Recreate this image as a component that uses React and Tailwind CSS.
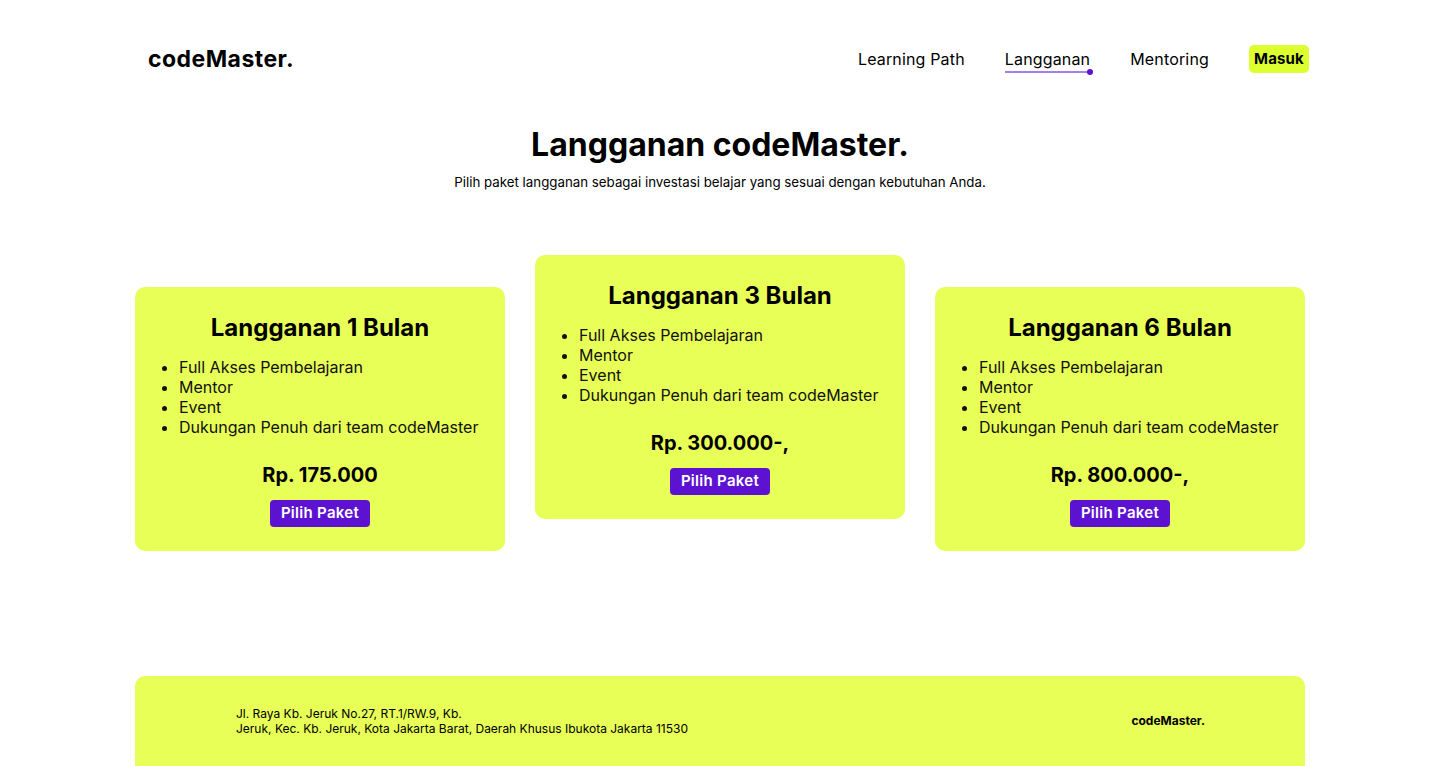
import React from "react";

const plans = [
  { title: "Langganan 1 Bulan", price: "Rp. 175.000", raised: false },
  { title: "Langganan 3 Bulan", price: "Rp. 300.000-,", raised: true },
  { title: "Langganan 6 Bulan", price: "Rp. 800.000-,", raised: false },
];

const features = [
  "Full Akses Pembelajaran",
  "Mentor",
  "Event",
  "Dukungan Penuh dari team codeMaster",
];

const PlanCard = ({ title, price, raised }) => (
  <div
    className={`w-[370px] h-[264px] rounded-[10px] bg-[#e8ff57] px-7 pt-[27px] flex flex-col ${
      raised ? "mt-0" : "mt-[32px]"
    }`}
  >
    <h3 className="text-center text-[24px] leading-[28px] font-bold text-black">{title}</h3>
    <ul className="mt-[15px] list-disc pl-4 text-[16px] leading-[20px] text-[#111] whitespace-nowrap">
      {features.map((f) => (
        <li key={f}>{f}</li>
      ))}
    </ul>
    <p className="mt-[24px] text-center text-[20px] leading-[28px] font-bold text-black">{price}</p>
    <div className="mt-[11px] flex justify-center">
      <button className="h-[27px] w-[100px] rounded-[4px] bg-[#5d12d2] text-white text-[15px] tracking-[0.02em] font-semibold">
        Pilih Paket
      </button>
    </div>
  </div>
);

export default function App() {
  return (
    <div
      className="min-h-screen bg-white text-black"
      style={{ fontFamily: "Inter, 'Noto Sans', sans-serif" }}
    >
      {/* HEADER */}
      <header className="mx-auto w-[1170px] pt-[45px] flex items-center justify-between">
        <div className="pl-[13px] text-[23px] font-bold tracking-[0.02em] leading-[28px]">codeMaster.</div>
        <nav className="flex items-center text-[16px] tracking-[0.01em] -mr-[4px]">
          <a className="mr-[40px]">Learning Path</a>
          <a className="relative mr-[40px]">
            Langganan
            <span className="absolute left-0 right-0 -bottom-[2px] h-[2px] bg-[#a77fe8]" />
            <span className="absolute -right-[3px] -bottom-[4px] h-[6px] w-[6px] rounded-full bg-[#5d12d2]" />
          </a>
          <a className="mr-[40px]">Mentoring</a>
          <button className="h-[28px] w-[60px] rounded-[5px] bg-[#deff2f] text-[15px] font-bold">
            Masuk
          </button>
        </nav>
      </header>

      {/* HERO */}
      <section className="mt-[52px] text-center">
        <h1 className="text-[32px] leading-[40px] font-bold">Langganan codeMaster.</h1>
        <p className="mt-[9px] text-[13.3px] leading-[16px]">
          Pilih paket langganan sebagai investasi belajar yang sesuai dengan kebutuhan Anda.
        </p>
      </section>

      {/* PLANS */}
      <section className="mx-auto mt-[65px] w-[1170px] flex items-start justify-between">
        {plans.map((p) => (
          <PlanCard key={p.title} {...p} />
        ))}
      </section>

      {/* FOOTER */}
      <footer className="mx-auto mt-[125px] w-[1170px] h-[100px] rounded-t-[10px] bg-[#e8ff57] flex items-start justify-between pl-[101px] pr-[100px] pt-[30px]">
        <p className="text-[12px] leading-[15px]">
          Jl. Raya Kb. Jeruk No.27, RT.1/RW.9, Kb.
          <br />
          Jeruk, Kec. Kb. Jeruk, Kota Jakarta Barat, Daerah Khusus Ibukota Jakarta 11530
        </p>
        <p className="mt-[6px] text-[12px] font-bold">codeMaster.</p>
      </footer>
    </div>
  );
}
